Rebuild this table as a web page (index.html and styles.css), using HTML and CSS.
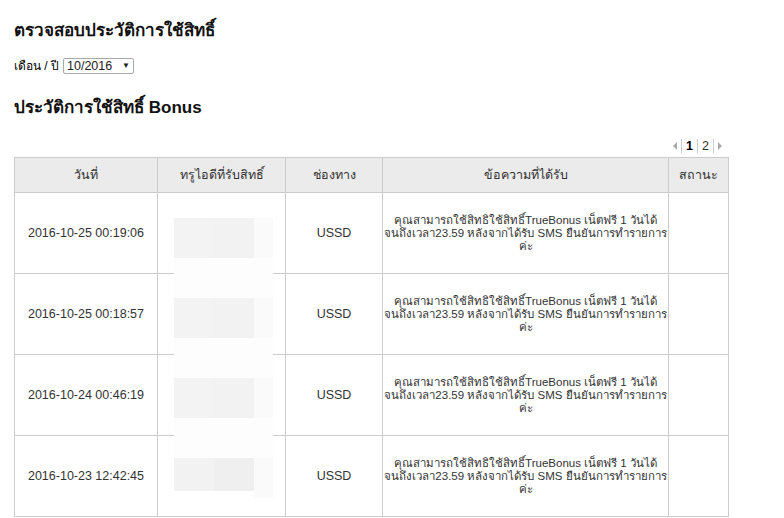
FILE: index.html
```html
<!DOCTYPE html>
<html lang="th">
<head>
<meta charset="utf-8">
<link rel="stylesheet" href="styles.css">
</head>
<body>
<div class="page">
  <h1 class="title">ตรวจสอบประวัติการใช้สิทธิ์</h1>
  <div class="filter">
    <span>เดือน / ปี</span>
    <span class="select">10/2016 <span class="caret">▼</span></span>
  </div>
  <h2 class="title title2">ประวัติการใช้สิทธิ์ Bonus</h2>
  <div class="pager">
    <span class="tri tri-left"></span>
    <span class="sep"></span>
    <span class="pg cur">1</span>
    <span class="sep"></span>
    <span class="pg">2</span>
    <span class="sep"></span>
    <span class="tri tri-right"></span>
  </div>
  <div class="tablewrap">
    <table class="hist">
      <colgroup>
        <col class="c1"><col class="c2"><col class="c3"><col class="c4"><col class="c5">
      </colgroup>
      <thead>
        <tr><th>วันที่</th><th>ทรูไอดีที่รับสิทธิ์</th><th>ช่องทาง</th><th>ข้อความที่ได้รับ</th><th>สถานะ</th></tr>
      </thead>
      <tbody>
        <tr><td>2016-10-25 00:19:06</td><td></td><td>USSD</td><td class="msg">คุณสามารถใช้สิทธิใช้สิทธิ์TrueBonus เน็ตฟรี 1 วันได้ จนถึงเวลา23.59 หลังจากได้รับ SMS ยืนยันการทำรายการค่ะ</td><td></td></tr>
        <tr><td>2016-10-25 00:18:57</td><td></td><td>USSD</td><td class="msg">คุณสามารถใช้สิทธิใช้สิทธิ์TrueBonus เน็ตฟรี 1 วันได้ จนถึงเวลา23.59 หลังจากได้รับ SMS ยืนยันการทำรายการค่ะ</td><td></td></tr>
        <tr><td>2016-10-24 00:46:19</td><td></td><td>USSD</td><td class="msg">คุณสามารถใช้สิทธิใช้สิทธิ์TrueBonus เน็ตฟรี 1 วันได้ จนถึงเวลา23.59 หลังจากได้รับ SMS ยืนยันการทำรายการค่ะ</td><td></td></tr>
        <tr><td>2016-10-23 12:42:45</td><td></td><td>USSD</td><td class="msg">คุณสามารถใช้สิทธิใช้สิทธิ์TrueBonus เน็ตฟรี 1 วันได้ จนถึงเวลา23.59 หลังจากได้รับ SMS ยืนยันการทำรายการค่ะ</td><td></td></tr>
      </tbody>
    </table>
    <div class="blur">
      <div class="b a"></div><div class="b b2"></div><div class="b c"></div>
      <div class="b l"></div><div class="b l"></div><div class="b l"></div>
      <div class="b a"></div><div class="b b2"></div><div class="b c"></div>
      <div class="b l"></div><div class="b l"></div><div class="b l"></div>
      <div class="b a"></div><div class="b b2"></div><div class="b c"></div>
      <div class="b l"></div><div class="b l"></div><div class="b l"></div>
      <div class="b a2"></div><div class="b b3"></div><div class="b c"></div>
    </div>
  </div>
</div>
</body>
</html>
```
FILE: styles.css
```css
html, body { margin: 0; padding: 0; background: #fff; }
body {
  font-family: "Liberation Sans", "Noto Sans", sans-serif;
  color: #000;
  font-size: 12px;
}
.page { padding: 0 14px; width: 714px; }
.title {
  font-size: 17px;
  font-weight: bold;
  margin: 0;
  padding-top: 20px;
  line-height: 22px;
  color: #111;
}
.title2 { padding-top: 23px; }
.filter {
  margin-top: 15px;
  display: flex;
  align-items: center;
  gap: 4px;
  font-size: 12px;
  height: 17px;
}
.select {
  display: inline-flex;
  align-items: center;
  border: 1px solid #a9a9a9;
  border-radius: 2px;
  height: 14px;
  padding: 0 3px;
  width: 63px;
  justify-content: space-between;
  font-size: 12.5px;
  color: #222;
}
.caret { font-size: 8px; }
.pager {
  display: flex;
  justify-content: flex-end;
  align-items: center;
  gap: 4px;
  margin-top: 20px;
  height: 14px;
  padding-right: 6px;
  font-size: 12.5px;
}
.pg { color: #333; }
.pg.cur { font-weight: bold; color: #000; }
.sep { width: 1px; height: 14px; background: #ccc; }
.tri { width: 0; height: 0; border-top: 4px solid transparent; border-bottom: 4px solid transparent; }
.tri-left { border-right: 4px solid #aaa; }
.tri-right { border-left: 4px solid #aaa; }
.tablewrap { position: relative; margin-top: 4px; }
.hist {
  border-collapse: collapse;
  width: 714px;
  table-layout: fixed;
}
.c1 { width: 143px; } .c2 { width: 128px; } .c3 { width: 97px; } .c4 { width: 286px; } .c5 { width: 60px; }
.hist th, .hist td {
  border: 1px solid #cccccc;
  text-align: center;
  color: #333;
}
.hist th {
  background: #ebebeb;
  font-weight: normal;
  height: 34px;
  padding: 0;
  font-size: 12.5px;
}
.hist td {
  height: 80px;
  padding: 0 2px;
  font-size: 12.5px;
}
.hist td.msg { font-size: 11.5px; line-height: 13px; padding: 0 1px; }
.blur {
  position: absolute;
  left: 160px;
  top: 61px;
  width: 99px;
  display: grid;
  grid-template-columns: 40px 40px 19px;
  grid-auto-rows: 40px;
}
.b.a { background: #f3f3f3; }
.b.b2 { background: #f2f2f2; }
.b.a2 { background: #f2f2f2; height: 33px; }
.b.b3 { background: #efefef; height: 33px; }
.b.c { background: #fafafa; }
.b.l { background: #fdfdfd; }
```
